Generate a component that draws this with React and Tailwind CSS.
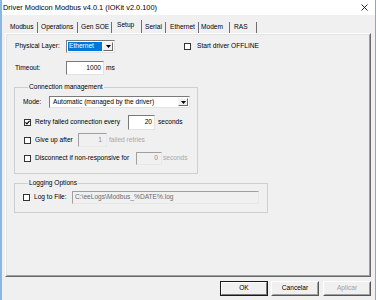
import React from "react";

function Check({ checked }) {
  return (
    <span className="w-[7px] h-[7px] border border-[#333333] bg-white flex items-center justify-center shrink-0">
      {checked && (
        <svg width="5" height="5" viewBox="0 0 5 5">
          <path d="M0.5 2.3 L1.9 3.8 L4.5 0.8" fill="none" stroke="#000" strokeWidth="1.2" />
        </svg>
      )}
    </span>
  );
}

function Arrow() {
  return (
    <span className="w-[10px] h-full bg-[#f0f0f0] border border-t-[#f8f8f8] border-l-[#f8f8f8] border-r-[#696969] border-b-[#696969] flex items-center justify-center shrink-0">
      <svg width="5" height="3" viewBox="0 0 5 3">
        <path d="M0 0 H5 L2.5 3 Z" fill="#000" />
      </svg>
    </span>
  );
}

const tabs = [
  { label: "Modbus", cls: "w-[32px] pl-[4px] h-[11px] border-r border-r-[#6f6f6f]" },
  { label: "Operations", cls: "w-[40px] pl-[3px] h-[11px] border-r border-r-[#6f6f6f]" },
  { label: "Gen SOE", cls: "w-[34px] pl-[3px] h-[11px] border-r border-r-[#6f6f6f]" },
  { label: "Setup", cls: "w-[30px] pl-[5px] h-[13px] pb-[2px] border-r border-r-[#6f6f6f]" },
  { label: "Serial", cls: "w-[24px] pl-[3px] h-[11px] border-r border-r-[#6f6f6f]" },
  { label: "Ethernet", cls: "w-[33px] pl-[4px] h-[11px] border-r border-r-[#6f6f6f]" },
  { label: "Modem", cls: "w-[31px] pl-[2px] h-[11px] border-r border-r-[#6f6f6f]" },
  { label: "RAS", cls: "w-[27px] pl-[4px] h-[11px] border-r border-r-[#6f6f6f]" },
];

const sunken =
  "border border-t-[#7a7a7a] border-l-[#7a7a7a] border-r-[#e3e3e3] border-b-[#e3e3e3]";
const sunkenDis =
  "border border-t-[#a0a0a0] border-l-[#a0a0a0] border-r-[#e8e8e8] border-b-[#e8e8e8] bg-[#f0f0f0]";

export default function App() {
  return (
    <div className="w-[376px] h-[300px] bg-[#f0f0f0] border-l-2 border-r border-l-[#8ab6e4] border-r-[#7eaad9] flex flex-col overflow-hidden font-['Liberation_Sans',Arial,sans-serif] text-[6.6px] leading-none text-black">
      {/* Title bar */}
      <div className="h-[15px] bg-white flex items-center justify-between pl-[1px] pr-[7px] shrink-0">
        <span className="text-[7.4px]">Driver Modicon Modbus v4.0.1 (IOKit v2.0.100)</span>
        <svg width="7" height="7" viewBox="0 0 7 7">
          <path d="M0.5 0.5 L6.5 6.5 M6.5 0.5 L0.5 6.5" stroke="#111" strokeWidth="0.9" fill="none" />
        </svg>
      </div>

      {/* Tabs */}
      <div className="h-[18px] flex items-end pl-[4px] shrink-0">
        {tabs.map((t) => (
          <div key={t.label} className={"flex items-center shrink-0 " + t.cls}>
            {t.label}
          </div>
        ))}
      </div>

      {/* Tab panel */}
      <div className="ml-[3px] w-[366px] h-[244px] shrink-0 border border-t-[#ffffff] border-l-[#ffffff] border-r-[#696969] border-b-[#696969]">
        <div className="w-full h-full border border-t-[#e3e3e3] border-l-[#e3e3e3] border-r-[#a0a0a0] border-b-[#a0a0a0] flex flex-col pt-[5px] pl-[7px]">
          {/* Row 1 */}
          <div className="flex items-center h-[13px]">
            <span className="w-[52px] pl-[1px] shrink-0">Physical Layer:</span>
            <div className={"w-[49px] h-[13px] flex bg-white p-[1px] shrink-0 " + sunken}>
              <span className="flex-1 bg-[#0078d7] text-white flex items-center pl-[1px] mr-[1px]">Ethernet</span>
              <Arrow />
            </div>
            <span className="ml-[69px]">
              <Check />
            </span>
            <span className="ml-[6px]">Start driver OFFLINE</span>
          </div>

          {/* Row 2 */}
          <div className="flex items-center h-[14px] mt-[8px]">
            <span className="w-[52px] pl-[1px] shrink-0">Timeout:</span>
            <div className={"w-[38px] h-[14px] bg-white flex items-center justify-end pr-[2px] shrink-0 " + sunken}>
              1000
            </div>
            <span className="ml-[2px]">ms</span>
          </div>

          {/* Connection management */}
          <fieldset className="mt-[8px] w-[184px] h-[91px] border border-[#cfcfcf] flex flex-col pl-[8px] pt-[5px]">
            <legend className="ml-[5px] px-[1px] leading-[8px]">Connection management</legend>
            <div className="flex items-center h-[12px]">
              <span className="w-[26px] shrink-0">Mode:</span>
              <div className={"w-[141px] h-[12px] flex bg-white p-[1px] shrink-0 " + sunken}>
                <span className="flex-1 flex items-center pl-[2px]">Automatic (managed by the driver)</span>
                <Arrow />
              </div>
            </div>

            <div className="flex items-center h-[15px] mt-[7px] pl-[1px]">
              <Check checked />
              <span className="ml-[4px] w-[93px] shrink-0">Retry failed connection every</span>
              <div className={"w-[27px] h-[15px] bg-white flex items-center justify-end pr-[2px] shrink-0 " + sunken}>
                20
              </div>
              <span className="ml-[3px]">seconds</span>
            </div>

            <div className="flex items-center h-[14px] mt-[3px] pl-[1px]">
              <Check />
              <span className="ml-[4px] w-[43px] shrink-0">Give up after</span>
              <div className={"w-[29px] h-[14px] flex items-center justify-end pr-[4px] text-[#8d8d8d] shrink-0 " + sunkenDis}>
                1
              </div>
              <span className="ml-[2px] text-[#a8a8a8]">failed retries</span>
            </div>

            <div className="flex items-center h-[13px] mt-[5px] pl-[1px]">
              <Check />
              <span className="ml-[4px] w-[101px] shrink-0">Disconnect if non-responsive for</span>
              <div className={"w-[26px] h-[13px] flex items-center justify-end pr-[3px] text-[#8d8d8d] shrink-0 " + sunkenDis}>
                0
              </div>
              <span className="ml-[1px] text-[#a8a8a8]">seconds</span>
            </div>
          </fieldset>

          {/* Logging Options */}
          <fieldset className="mt-[5px] w-[254px] h-[34px] border border-[#cfcfcf] flex flex-col pl-[8px] pt-[4px]">
            <legend className="ml-[5px] px-[1px] leading-[8px]">Logging Options</legend>
            <div className="flex items-center h-[13px]">
              <Check />
              <span className="ml-[4px] w-[38px] shrink-0">Log to File:</span>
              <div className={"w-[187px] h-[13px] flex items-center pl-[2px] text-[#6d6d6d] shrink-0 " + sunkenDis}>
                C:\eeLogs\Modbus_%DATE%.log
              </div>
            </div>
          </fieldset>
        </div>
      </div>

      {/* Buttons */}
      <div className="flex justify-end pr-[4px] mt-[4px] h-[15px] shrink-0">
        <div className="w-[48px] h-[15px] border border-[#1a1a1a] flex">
          <div className="flex-1 border border-t-white border-l-white border-r-[#7a7a7a] border-b-[#7a7a7a] flex items-center justify-center">
            OK
          </div>
        </div>
        <div className="ml-[3px] w-[48px] h-[15px] border border-t-white border-l-white border-r-[#555555] border-b-[#555555] flex">
          <div className="flex-1 border border-t-[#f0f0f0] border-l-[#f0f0f0] border-r-[#a0a0a0] border-b-[#a0a0a0] flex items-center justify-center">
            Cancelar
          </div>
        </div>
        <div className="ml-[4px] w-[48px] h-[15px] border border-t-white border-l-white border-r-[#555555] border-b-[#555555] flex">
          <div className="flex-1 border border-t-[#f0f0f0] border-l-[#f0f0f0] border-r-[#a0a0a0] border-b-[#a0a0a0] flex items-center justify-center text-[#a0a0a0]">
            Aplicar
          </div>
        </div>
      </div>
    </div>
  );
}
